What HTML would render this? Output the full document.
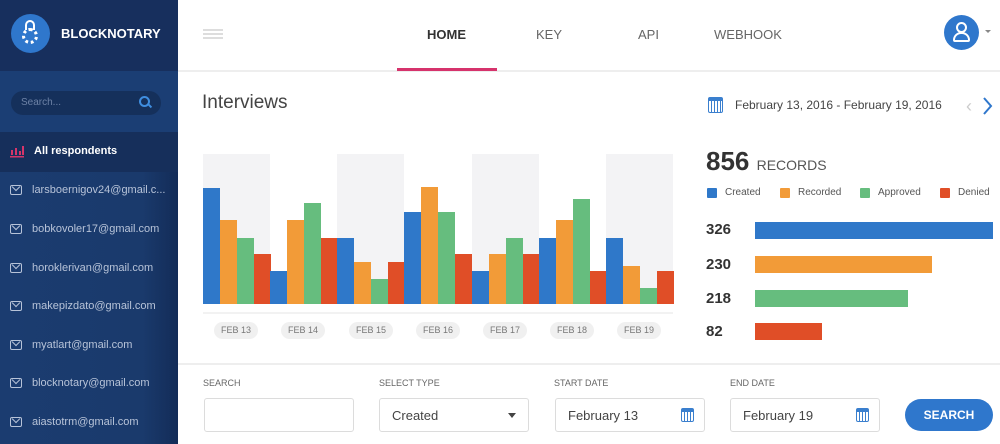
<!DOCTYPE html>
<html><head><meta charset="utf-8"><style>
*{margin:0;padding:0;box-sizing:border-box}
body{width:1000px;height:444px;overflow:hidden;background:#fff;font-family:"Liberation Sans",sans-serif;position:relative}
.a{position:absolute}
.sb{left:0;top:0;width:178px;height:444px;background:linear-gradient(90deg,#1b3c70 0%,#1a3a6c 80%,#132c58 100%)}
.em{left:10px;font-size:11px;color:#b7c3d8;display:flex;align-items:center;gap:10px}
.env{width:12px;height:10px;border:1.5px solid #b7c3d8;border-radius:2px;position:relative}
.env:after{content:"";position:absolute;left:1px;top:0px;width:5px;height:5px;border-right:1.5px solid #b7c3d8;border-bottom:1.5px solid #b7c3d8;transform:translate(1px,-2px) rotate(45deg)}
.nav{font-size:13px;font-weight:bold;color:#555;top:27px}
.lbl{font-size:9px;color:#666;top:378px}
.inp{top:398px;height:34px;width:150px;border:1px solid #dcdcdc;border-radius:3px;font-size:13px;color:#444;padding:9px 12px}
.cal{width:13px;height:14px;border:1.5px solid #3a7fce;border-radius:2px;background:repeating-linear-gradient(90deg,#fff 0 2px,#3a7fce 2px 3px);border-top:4px solid #3a7fce}
.pill{top:322px;height:17px;width:44px;border-radius:9px;background:#f0f0f0;font-size:9px;color:#777;text-align:center;line-height:17px}
.lg{top:187px;font-size:10px;color:#555;display:flex;align-items:center;gap:8px}
.lg i{width:10px;height:10px;display:block;border-radius:1px}
.num{left:706px;font-size:15px;font-weight:bold;color:#333}
</style></head><body>
<div class="a sb"></div>
<div class="a" style="left:0;top:0;width:178px;height:71px;background:#172f5d"></div>
<div class="a" style="left:0;top:71px;width:178px;height:61px;background:#1b3e74"></div>
<div class="a" style="left:0;top:132px;width:178px;height:40px;background:#162f5b"></div>
<div class="a" style="left:11px;top:14px;width:39px;height:39px;border-radius:50%;background:#2f77cc"></div>
<div class="a" style="left:25px;top:20px;width:10px;height:10px;border:2.5px solid #fff;border-bottom:none;border-radius:5px 5px 0 0"></div>
<div class="a" style="left:22px;top:28px;width:16px;height:16px;border-radius:50%;border:3px dotted #fff"></div>
<div class="a" style="left:61px;top:26px;color:#fff;font-weight:bold;font-size:13px">BLOCKNOTARY</div>
<div class="a" style="left:11px;top:91px;width:150px;height:24px;border-radius:12px;background:#15305b"></div>
<div class="a" style="left:21px;top:97px;font-size:10px;color:#6d82a6">Search...</div>
<div class="a" style="left:139px;top:96px;width:11px;height:11px;border:2px solid #3f8ee0;border-radius:50%"></div>
<div class="a" style="left:148px;top:105px;width:4px;height:2px;background:#3f8ee0;transform:rotate(45deg)"></div>
<svg class="a" style="left:10px;top:145px" width="14" height="13"><g fill="#d6356a"><rect x="1" y="5" width="2" height="5"/><rect x="5" y="3" width="2" height="7"/><rect x="9" y="6" width="2" height="4"/><rect x="12" y="1" width="2" height="9"/><rect x="0" y="11" width="14" height="1.5"/></g></svg>
<div class="a" style="left:34px;top:145px;font-size:11px;color:#fff;font-weight:bold">All respondents</div>
<div class="a em" style="top:184px"><span class="env"></span>larsboernigov24@gmail.c...</div>
<div class="a em" style="top:223px"><span class="env"></span>bobkovoler17@gmail.com</div>
<div class="a em" style="top:262px"><span class="env"></span>horoklerivan@gmail.com</div>
<div class="a em" style="top:300px"><span class="env"></span>makepizdato@gmail.com</div>
<div class="a em" style="top:339px"><span class="env"></span>myatlart@gmail.com</div>
<div class="a em" style="top:377px"><span class="env"></span>blocknotary@gmail.com</div>
<div class="a em" style="top:416px"><span class="env"></span>aiastotrm@gmail.com</div>

<div class="a" style="left:203px;top:29px;width:20px;height:2px;background:#ddd;box-shadow:0 4px 0 #ddd,0 8px 0 #ddd"></div>
<div class="a nav" style="left:427px;color:#333">HOME</div>
<div class="a nav" style="left:536px;font-weight:normal;color:#666">KEY</div>
<div class="a nav" style="left:638px;font-weight:normal;color:#666">API</div>
<div class="a nav" style="left:714px;font-weight:normal;color:#666">WEBHOOK</div>
<div class="a" style="left:178px;top:70px;width:822px;height:2px;background:#eee"></div>
<div class="a" style="left:397px;top:68px;width:100px;height:3px;background:#d6336c"></div>
<div class="a" style="left:944px;top:15px;width:35px;height:35px;border-radius:50%;background:#2f77cc"></div>
<div class="a" style="left:956px;top:22px;width:11px;height:11px;border:2px solid #fff;border-radius:50%"></div>
<div class="a" style="left:953px;top:32px;width:17px;height:10px;border:2px solid #fff;border-radius:8px 8px 2px 2px"></div>
<div class="a" style="left:985px;top:30px;border:3px solid transparent;border-top:3px solid #888"></div>

<div class="a" style="left:202px;top:92px;font-size:19px;color:#444">Interviews</div>
<div class="a cal" style="left:708px;top:97px;width:15px;height:16px"></div>
<div class="a" style="left:735px;top:98px;font-size:12px;color:#444">February 13, 2016 - February 19, 2016</div>
<div class="a" style="left:966px;top:96px;font-size:18px;color:#ccc">&#x2039;</div>
<svg class="a" style="left:982px;top:96px" width="12" height="20"><path d="M2 2 L9 10 L2 18" stroke="#2f77cc" stroke-width="2" fill="none"/></svg>

<svg class="a" style="left:0;top:0" width="1000" height="444">
<g fill="#f3f3f5"><rect x="203" y="154" width="67" height="150"/><rect x="337" y="154" width="67" height="150"/><rect x="472" y="154" width="67" height="150"/><rect x="606" y="154" width="67" height="150"/></g>
<line x1="203" y1="313" x2="673" y2="313" stroke="#e4e4e4"/>
<g>
<rect x="203" y="188" width="17" height="116" fill="#2f78c9"/><rect x="220" y="220" width="17" height="84" fill="#f29b38"/><rect x="237" y="238" width="17" height="66" fill="#66bd7e"/><rect x="254" y="254" width="17" height="50" fill="#e04e27"/>
<rect x="270" y="271" width="17" height="33" fill="#2f78c9"/><rect x="287" y="220" width="17" height="84" fill="#f29b38"/><rect x="304" y="203" width="17" height="101" fill="#66bd7e"/><rect x="321" y="238" width="17" height="66" fill="#e04e27"/>
<rect x="337" y="238" width="17" height="66" fill="#2f78c9"/><rect x="354" y="262" width="17" height="42" fill="#f29b38"/><rect x="371" y="279" width="17" height="25" fill="#66bd7e"/><rect x="388" y="262" width="17" height="42" fill="#e04e27"/>
<rect x="404" y="212" width="17" height="92" fill="#2f78c9"/><rect x="421" y="187" width="17" height="117" fill="#f29b38"/><rect x="438" y="212" width="17" height="92" fill="#66bd7e"/><rect x="455" y="254" width="17" height="50" fill="#e04e27"/>
<rect x="472" y="271" width="17" height="33" fill="#2f78c9"/><rect x="489" y="254" width="17" height="50" fill="#f29b38"/><rect x="506" y="238" width="17" height="66" fill="#66bd7e"/><rect x="523" y="254" width="17" height="50" fill="#e04e27"/>
<rect x="539" y="238" width="17" height="66" fill="#2f78c9"/><rect x="556" y="220" width="17" height="84" fill="#f29b38"/><rect x="573" y="199" width="17" height="105" fill="#66bd7e"/><rect x="590" y="271" width="17" height="33" fill="#e04e27"/>
<rect x="606" y="238" width="17" height="66" fill="#2f78c9"/><rect x="623" y="266" width="17" height="38" fill="#f29b38"/><rect x="640" y="288" width="17" height="16" fill="#66bd7e"/><rect x="657" y="271" width="17" height="33" fill="#e04e27"/>
</g>
</svg>
<div class="a pill" style="left:214px">FEB 13</div>
<div class="a pill" style="left:281px">FEB 14</div>
<div class="a pill" style="left:349px">FEB 15</div>
<div class="a pill" style="left:416px">FEB 16</div>
<div class="a pill" style="left:483px">FEB 17</div>
<div class="a pill" style="left:550px">FEB 18</div>
<div class="a pill" style="left:617px">FEB 19</div>

<div class="a" style="left:706px;top:146px;font-size:26px;font-weight:bold;color:#333">856 <span style="font-size:14px;font-weight:normal;color:#555">RECORDS</span></div>
<div class="a lg" style="left:707px"><i style="background:#2f78c9"></i>Created</div>
<div class="a lg" style="left:780px"><i style="background:#f29b38"></i>Recorded</div>
<div class="a lg" style="left:860px"><i style="background:#66bd7e"></i>Approved</div>
<div class="a lg" style="left:940px"><i style="background:#e04e27"></i>Denied</div>
<div class="a num" style="top:221px">326</div>
<div class="a num" style="top:256px">230</div>
<div class="a num" style="top:290px">218</div>
<div class="a num" style="top:323px">82</div>
<div class="a" style="left:755px;top:222px;width:238px;height:17px;background:#2f78c9"></div>
<div class="a" style="left:755px;top:256px;width:177px;height:17px;background:#f29b38"></div>
<div class="a" style="left:755px;top:290px;width:153px;height:17px;background:#66bd7e"></div>
<div class="a" style="left:755px;top:323px;width:67px;height:17px;background:#e04e27"></div>

<div class="a" style="left:178px;top:363px;width:822px;height:2px;background:#eee"></div>
<div class="a lbl" style="left:203px">SEARCH</div>
<div class="a lbl" style="left:379px">SELECT TYPE</div>
<div class="a lbl" style="left:554px">START DATE</div>
<div class="a lbl" style="left:730px">END DATE</div>
<div class="a inp" style="left:204px"></div>
<div class="a inp" style="left:379px">Created<span style="position:absolute;right:12px;top:14px;border:4px solid transparent;border-top:5px solid #444"></span></div>
<div class="a inp" style="left:555px">February 13<span class="a cal" style="right:10px;top:9px"></span></div>
<div class="a inp" style="left:730px">February 19<span class="a cal" style="right:10px;top:9px"></span></div>
<div class="a" style="left:905px;top:399px;width:88px;height:32px;border-radius:16px;background:#2f77cc;color:#fff;font-size:12px;font-weight:bold;text-align:center;line-height:32px">SEARCH</div>
</body></html>
